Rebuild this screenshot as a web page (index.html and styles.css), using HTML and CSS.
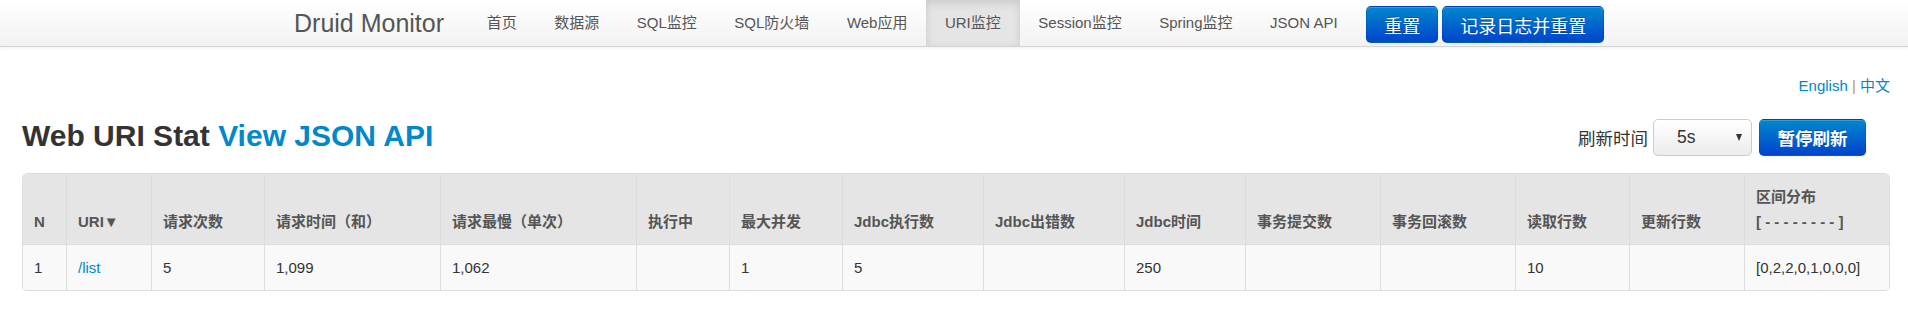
FILE: index.html
```html
<!DOCTYPE html>
<html lang="zh">
<head>
<meta charset="utf-8">
<title>Druid Monitor - Web URI Stat</title>
<link rel="stylesheet" href="styles.css">
</head>
<body>
<div class="navbar">
  <div class="navbar-inner">
    <a class="brand" href="#">Druid Monitor</a>
    <ul class="nav">
      <li><a href="#">首页</a></li>
      <li><a href="#">数据源</a></li>
      <li><a href="#">SQL监控</a></li>
      <li><a href="#">SQL防火墙</a></li>
      <li><a href="#">Web应用</a></li>
      <li class="active"><a href="#">URI监控</a></li>
      <li><a href="#">Session监控</a></li>
      <li><a href="#">Spring监控</a></li>
      <li><a href="#">JSON API</a></li>
    </ul>
    <div class="nav-btns">
      <button class="btn btn-primary" type="button">重置</button>
      <button class="btn btn-primary" type="button">记录日志并重置</button>
    </div>
  </div>
</div>

<div class="container">
  <div class="lang"><a href="#">English</a> <span class="sep">|</span> <a href="#">中文</a></div>

  <div class="title-row">
    <h3>Web URI Stat <a href="#">View JSON API</a></h3>
    <div class="refresh">
      <label>刷新时间</label>
      <div class="select"><span>5s</span><span class="caret"></span></div>
      <button class="btn btn-primary btn-bold" type="button">暂停刷新</button>
    </div>
  </div>

  <table class="stat">
    <colgroup>
      <col class="w1"><col class="w2"><col class="w3"><col class="w4"><col class="w5">
      <col class="w6"><col class="w7"><col class="w8"><col class="w9"><col class="w10">
      <col class="w11"><col class="w12"><col class="w13"><col class="w14"><col class="w15">
    </colgroup>
    <thead>
      <tr>
        <th>N</th>
        <th>URI▼</th>
        <th>请求次数</th>
        <th>请求时间（和）</th>
        <th>请求最慢（单次）</th>
        <th>执行中</th>
        <th>最大并发</th>
        <th>Jdbc执行数</th>
        <th>Jdbc出错数</th>
        <th>Jdbc时间</th>
        <th>事务提交数</th>
        <th>事务回滚数</th>
        <th>读取行数</th>
        <th>更新行数</th>
        <th>区间分布<br>[ - - - - - - - - ]</th>
      </tr>
    </thead>
    <tbody>
      <tr>
        <td>1</td>
        <td><a href="#">/list</a></td>
        <td>5</td>
        <td>1,099</td>
        <td>1,062</td>
        <td></td>
        <td>1</td>
        <td>5</td>
        <td></td>
        <td>250</td>
        <td></td>
        <td></td>
        <td>10</td>
        <td></td>
        <td>[0,2,2,0,1,0,0,0]</td>
      </tr>
    </tbody>
  </table>
</div>
</body>
</html>
```
FILE: styles.css
```css
body {
  margin: 0;
  font-family: "Liberation Sans", Arial, "Noto Sans CJK SC", sans-serif;
  font-size: 15px;
  color: #333;
  background: #fff;
}

a { text-decoration: none; }

/* navbar */
.navbar {
  height: 46px;
  background: linear-gradient(#ffffff, #f2f2f2);
  border-bottom: 1px solid #d4d4d4;
  box-shadow: 0 1px 4px rgba(0, 0, 0, 0.065);
}
.navbar-inner {
  width: 1360px;
  margin: 0 auto;
  height: 46px;
  display: flex;
}
.brand {
  font-size: 25px;
  line-height: 46px;
  color: #555;
  padding: 0 24px 0 20px;
}
.nav {
  display: flex;
  list-style: none;
  margin: 0;
  padding: 0;
}
.nav a {
  display: block;
  padding: 0 18.75px;
  line-height: 46px;
  color: #555;
  font-size: 15px;
}
.nav .active a {
  background: #e5e5e5;
  box-shadow: inset 0 3px 8px rgba(0, 0, 0, 0.125);
}
.nav-btns {
  display: flex;
  align-items: flex-start;
  gap: 4px;
  margin: 6px 0 0 10px;
}

/* buttons */
.btn {
  font-family: "Liberation Sans", Arial, "Noto Sans CJK SC", sans-serif;
  font-size: 18px;
  height: 37px;
  padding: 0 17px;
  border: 1px solid;
  border-color: rgba(0, 0, 0, 0.1) rgba(0, 0, 0, 0.1) rgba(0, 0, 0, 0.25);
  border-radius: 5px;
  cursor: pointer;
}
.btn-primary {
  color: #fff;
  background: linear-gradient(#0088cc, #0044cc);
  text-shadow: 0 -1px 0 rgba(0, 0, 0, 0.25);
  box-shadow: inset 0 1px 0 rgba(255, 255, 255, 0.2), 0 1px 2px rgba(0, 0, 0, 0.05);
}
.btn-bold {
  font-size: 17.5px;
  font-weight: bold;
  padding: 0 17.5px;
}

/* content */
.container {
  padding: 0 18px 0 22px;
}
.lang {
  margin-top: 29px;
  line-height: 20px;
  text-align: right;
}
.lang a { color: #0088cc; }
.lang .sep { color: #c0954f; }

.title-row {
  display: flex;
  justify-content: space-between;
  align-items: center;
  height: 37px;
  margin-top: 23px;
}
.title-row h3 {
  margin: 0 0 4px;
  font-size: 30px;
  line-height: 33px;
  font-weight: bold;
  color: #333;
}
.title-row h3 a { color: #0088cc; }

.refresh {
  display: flex;
  align-items: center;
  margin-right: 24px;
}
.refresh label {
  font-size: 17.5px;
  margin-right: 5px;
  color: #333;
}
.select {
  box-sizing: border-box;
  width: 99px;
  height: 37px;
  margin-right: 7px;
  padding: 0 9px 0 23px;
  display: flex;
  align-items: center;
  justify-content: space-between;
  border: 1px solid #ccc;
  border-radius: 5px;
  background: linear-gradient(#ffffff, #ececec);
  font-size: 17.5px;
  color: #333;
}
.caret {
  width: 0;
  height: 0;
  border-style: solid;
  border-width: 7px 3.5px 0;
  border-color: #333 transparent transparent;
}

/* table */
.stat {
  width: 100%;
  margin-top: 17px;
  table-layout: fixed;
  border-collapse: separate;
  border-spacing: 0;
  border: 1px solid #ddd;
  border-radius: 5px;
}
.stat th,
.stat td {
  padding: 10px 11px;
  line-height: 25px;
  text-align: left;
  border-left: 1px solid #ddd;
  white-space: nowrap;
}
.stat th:first-child,
.stat td:first-child { border-left: 0; }
.stat th {
  background: #e5e5e5;
  vertical-align: bottom;
  font-weight: bold;
  color: #555;
}
.stat td {
  background: #f9f9f9;
  border-top: 1px solid #ddd;
  color: #333;
}
.stat td a { color: #0088cc; }
.stat th:first-child { border-top-left-radius: 4px; }
.stat th:last-child { border-top-right-radius: 4px; }
.stat td:first-child { border-bottom-left-radius: 4px; }
.stat td:last-child { border-bottom-right-radius: 4px; }

.w1 { width: 43px; }
.w2 { width: 85px; }
.w3 { width: 113px; }
.w4 { width: 176px; }
.w5 { width: 196px; }
.w6 { width: 93px; }
.w7 { width: 113px; }
.w8 { width: 141px; }
.w9 { width: 141px; }
.w10 { width: 121px; }
.w11 { width: 135px; }
.w12 { width: 135px; }
.w13 { width: 114px; }
.w14 { width: 115px; }
.w15 { width: 145px; }
```
